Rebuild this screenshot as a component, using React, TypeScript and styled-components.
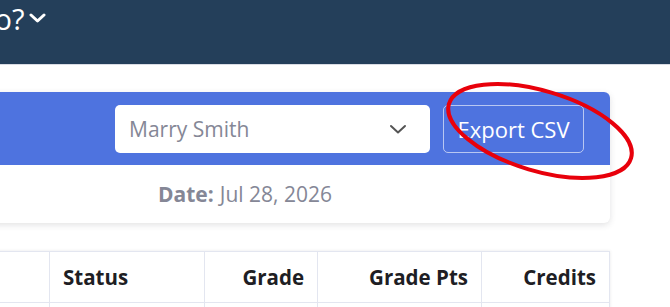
import styled, { createGlobalStyle } from 'styled-components'

const GlobalStyle = createGlobalStyle`
  html, body {
    margin: 0;
    padding: 0;
    background: #ffffff;
    overflow: hidden;
  }
  body {
    font-family: "Open Sans", "Noto Sans", sans-serif;
  }
`

const columns = [
  { label: '', width: 169, align: 'left' },
  { label: 'Status', width: 155, align: 'left' },
  { label: 'Grade', width: 113, align: 'right' },
  { label: 'Grade Pts', width: 164, align: 'right' },
  { label: 'Credits', width: 128, align: 'right' },
] as const

export default function App() {
  return (
    <Screen>
      <GlobalStyle />
      <Navbar>
        <Title>
          Who?
          <svg width="17" height="10" viewBox="0 0 17 10">
            <path d="M2 2 L8.5 8 L15 2" fill="none" stroke="#fff" strokeWidth="3" strokeLinecap="round" strokeLinejoin="round" />
          </svg>
        </Title>
      </Navbar>
      <Content>
        <Card>
          <CardHeader>
            <Select>
              <span>Marry Smith</span>
              <svg width="18" height="10" viewBox="0 0 18 10">
                <path d="M2 2 L9 8.5 L16 2" fill="none" stroke="#555" strokeWidth="2" strokeLinecap="round" strokeLinejoin="round" />
              </svg>
            </Select>
            <ExportButton>Export CSV</ExportButton>
          </CardHeader>
          <CardBody>
            <b>Date:</b> Jul 28, 2026
          </CardBody>
        </Card>
        <Table>
          <thead>
            <tr>
              {columns.map((c, i) => (
                <Th key={i} $w={c.width} $align={c.align}>{c.label}</Th>
              ))}
            </tr>
          </thead>
          <tbody>
            <tr>
              {columns.map((c, i) => (
                <Td key={i} />
              ))}
            </tr>
          </tbody>
        </Table>
      </Content>
      <Marker width="220" height="120" viewBox="0 0 220 120">
        <ellipse cx="110" cy="61" rx="95" ry="40" transform="rotate(16.6 110 61)" fill="none" stroke="#e8000b" strokeWidth="4" />
      </Marker>
    </Screen>
  )
}

const Screen = styled.div`
  position: relative;
  width: 670px;
  height: 307px;
  overflow: hidden;
`

const Navbar = styled.header`
  height: 64px;
  background: #243f5a;
  border-bottom: 1px solid #d9dce4;
`

const Title = styled.div`
  display: flex;
  align-items: center;
  gap: 4px;
  margin-left: -50px;
  height: 36px;
  color: #ffffff;
  font-size: 29px;
  font-weight: 400;
  line-height: 1;
`

const Content = styled.main`
  margin-left: -120px;
  width: 730px;
  padding-top: 27px;
  display: flex;
  flex-direction: column;
  gap: 28px;
`

const Card = styled.section`
  background: #ffffff;
  border-radius: 6px;
  box-shadow: 0 2px 6px rgba(58, 59, 69, 0.15);
  overflow: hidden;
`

const CardHeader = styled.div`
  height: 73px;
  background: #4e73df;
  display: flex;
  align-items: center;
  justify-content: flex-end;
  gap: 13px;
  padding: 0 26px;
  box-sizing: border-box;
`

const Select = styled.div`
  width: 315px;
  height: 48px;
  box-sizing: border-box;
  background: #ffffff;
  border-radius: 5px;
  display: flex;
  align-items: center;
  justify-content: space-between;
  padding: 0 23px 0 14px;
  color: #858796;
  font-size: 21px;
`

const ExportButton = styled.button`
  width: 141px;
  height: 48px;
  background: transparent;
  border: 1px solid rgba(255, 255, 255, 0.6);
  border-radius: 5px;
  color: #ffffff;
  font-family: inherit;
  font-size: 22px;
  padding: 0;
`

const CardBody = styled.div`
  height: 58px;
  display: flex;
  align-items: center;
  justify-content: center;
  gap: 6px;
  color: #858796;
  font-size: 21px;

  b {
    font-weight: 700;
  }
`

const Table = styled.table`
  border-collapse: collapse;
  width: 730px;
  table-layout: fixed;
  background: #ffffff;
  box-shadow: 0 0 3px rgba(58, 59, 69, 0.12);
`

const Th = styled.th<{ $w: number; $align: string }>`
  width: ${p => p.$w}px;
  height: 51px;
  box-sizing: border-box;
  padding: 0 13px;
  text-align: ${p => p.$align};
  font-size: 20.5px;
  font-weight: 700;
  color: #1e1e24;
  border: 1px solid #e3e6f0;
`

const Td = styled.td`
  height: 40px;
  border: 1px solid #e3e6f0;
`

const Marker = styled.svg`
  position: absolute;
  left: 430px;
  top: 70px;
  pointer-events: none;
`
